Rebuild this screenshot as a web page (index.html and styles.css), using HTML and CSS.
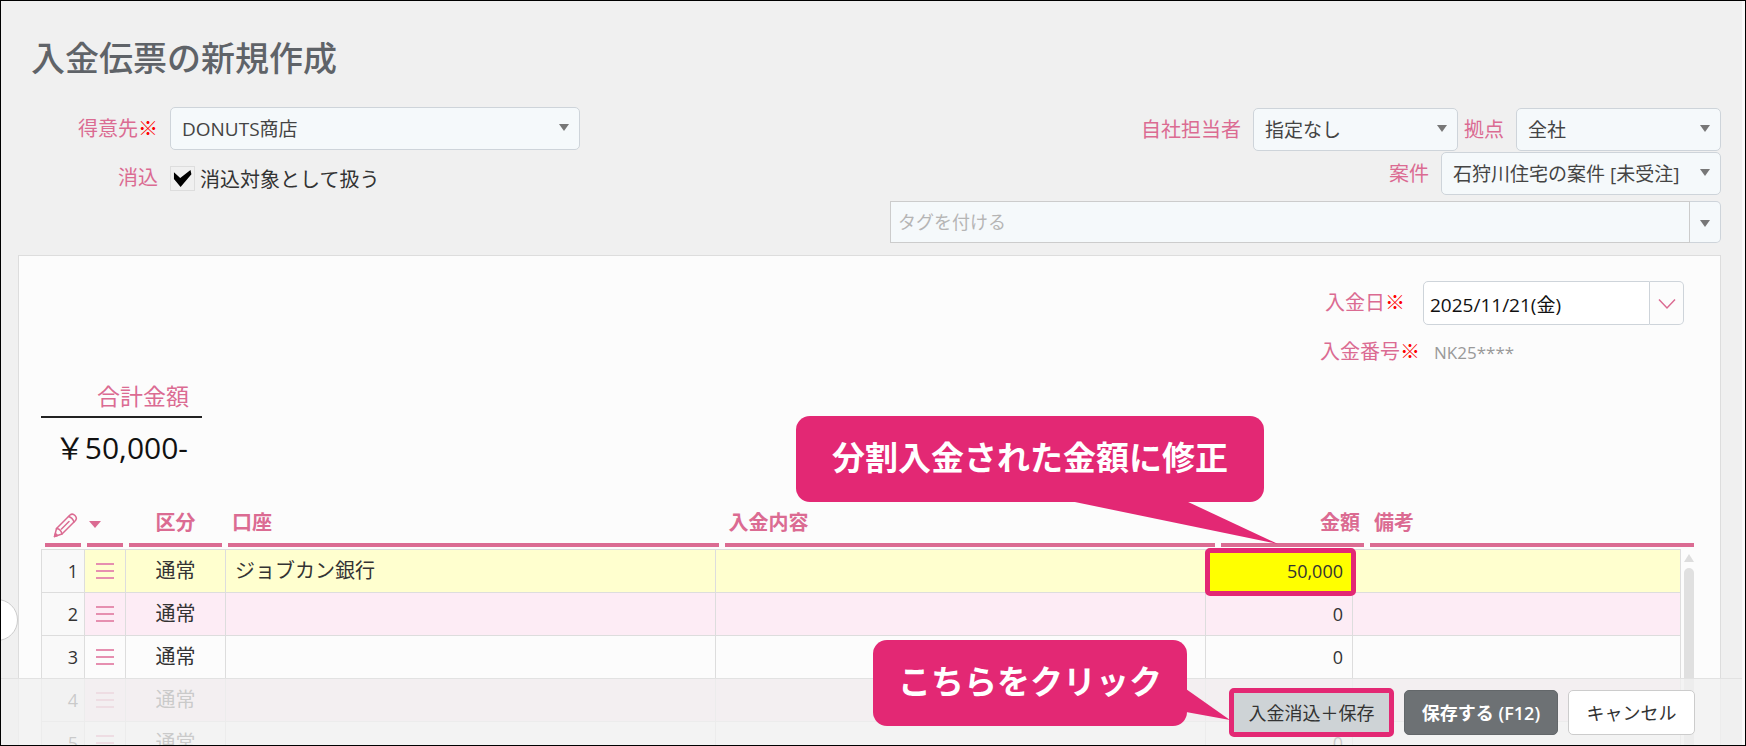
FILE: index.html
```html
<!DOCTYPE html>
<html lang="ja">
<head>
    <meta charset="UTF-8">
    <title>入金伝票の新規作成</title>
    <link rel="stylesheet" href="styles.css">
</head>
<body>
<div class="page">
    <h1 class="title">入金伝票の新規作成</h1>

    <!--伝票ヘッダー-->
    <div class="head">
        <div class="head-left">
            <label class="label" for="customer">得意先<span class="req">※</span></label>
            <div class="select customer">
                <select id="customer"><option>DONUTS商店</option></select>
            </div>
            <label class="label" for="clear">消込</label>
            <div class="check">
                <input type="checkbox" id="clear" checked>
                <label for="clear">消込対象として扱う</label>
            </div>
        </div>
        <div class="head-right">
            <div class="line">
                <label class="label" for="staff">自社担当者</label>
                <div class="select staff">
                    <select id="staff"><option>指定なし</option></select>
                </div>
                <label class="label base-label" for="base">拠点</label>
                <div class="select staff">
                    <select id="base"><option>全社</option></select>
                </div>
            </div>
            <div class="line">
                <label class="label" for="project">案件</label>
                <div class="select project">
                    <select id="project"><option>石狩川住宅の案件 [未受注]</option></select>
                </div>
            </div>
            <div class="tag">
                <input type="text" placeholder="タグを付ける" aria-label="タグ">
                <button type="button" aria-label="タグ一覧"><i class="caret"></i></button>
            </div>
        </div>
    </div>

    <!--伝票本体-->
    <div class="panel">
        <div class="date-row">
            <label class="label" for="date">入金日<span class="req">※</span></label>
            <div class="date">
                <input type="text" id="date" value="2025/11/21(金)">
                <button type="button" aria-label="カレンダー">
                    <svg width="18" height="12" viewBox="0 0 18 12"><path d="M1 1.5l8 8.5 8-8.5" fill="none" stroke="#db6b92" stroke-width="1.5"/></svg>
                </button>
            </div>
        </div>
        <div class="number-row">
            <span class="label">入金番号<span class="req">※</span></span>
            <span class="number">NK25****</span>
        </div>

        <div class="total">
            <div class="total-label">合計金額</div>
            <div class="total-value">￥50,000-</div>
        </div>

        <!--明細-->
        <table class="grid-head">
            <tr>
                <th class="h-no">
                    <svg width="26" height="26" viewBox="0 0 26 26" fill="none" stroke="#db6b92" stroke-width="1.5" stroke-linejoin="round" stroke-linecap="round">
                        <path d="M1.500 24.500L3.500 16.500L17 3Q19.500 1 22 3.500T22.500 8.500L9 22Z"/>
                        <path d="M3.500 16.500Q8 17 9 22M15.500 4.500Q19.500 5.500 21 10M8.500 17L16 9.500"/>
                        <path d="M1.500 24.500L2.500 21.500L4.500 23.500Z" fill="#db6b92"/>
                    </svg>
                </th>
                <th class="h-menu"><i class="caret caret-pink"></i></th>
                <th class="h-kind">区分</th>
                <th>口座</th>
                <th>入金内容</th>
                <th class="h-money">金額</th>
                <th class="h-note">備考</th>
            </tr>
        </table>
        <div class="grid-body">
            <table class="grid">
                <tr class="current">
                    <td class="no">1</td>
                    <td class="menu"><i class="bars"></i></td>
                    <td class="kind">通常</td>
                    <td>ジョブカン銀行</td>
                    <td></td>
                    <td class="money marked">50,000</td>
                    <td class="note"></td>
                </tr>
                <tr class="even">
                    <td class="no">2</td>
                    <td class="menu"><i class="bars"></i></td>
                    <td class="kind">通常</td>
                    <td></td>
                    <td></td>
                    <td class="money">0</td>
                    <td class="note"></td>
                </tr>
                <tr>
                    <td class="no">3</td>
                    <td class="menu"><i class="bars"></i></td>
                    <td class="kind">通常</td>
                    <td></td>
                    <td></td>
                    <td class="money">0</td>
                    <td class="note"></td>
                </tr>
                <tr class="even">
                    <td class="no">4</td>
                    <td class="menu"><i class="bars"></i></td>
                    <td class="kind">通常</td>
                    <td></td>
                    <td></td>
                    <td class="money">0</td>
                    <td class="note"></td>
                </tr>
                <tr>
                    <td class="no">5</td>
                    <td class="menu"><i class="bars"></i></td>
                    <td class="kind">通常</td>
                    <td></td>
                    <td></td>
                    <td class="money">0</td>
                    <td class="note"></td>
                </tr>
            </table>
            <div class="scroll">
                <i class="scroll-up"></i>
                <div class="scroll-thumb"></div>
            </div>
        </div>
    </div>

    <!--サイドメニューのつまみ-->
    <div class="knob"></div>

    <!--フッター-->
    <div class="foot">
        <button type="button" class="btn btn-clear">入金消込＋保存</button>
        <button type="button" class="btn btn-save">保存する (F12)</button>
        <button type="button" class="btn btn-cancel">キャンセル</button>
    </div>

    <!--吹き出し-->
    <div class="callout callout-money">分割入金された金額に修正</div>
    <div class="callout callout-click">こちらをクリック</div>
</div>
</body>
</html>
```

FILE: styles.css
```css
*{
    margin:0;
    padding:0;
    box-sizing:border-box;
}
body{
    font-family:"Open Sans","Noto Sans CJK JP",sans-serif;
    font-size:20px;
    color:#333;
}
input,select,button{
    font-family:inherit;
    font-size:19px;
    color:inherit;
}
.page{
    height:100vh;
    border:1px solid #000;
    background:#f0f0f0;
    box-shadow:inset -3px 0 #f9f9f9;
    position:relative;
    overflow:hidden;
    display:flex;
    flex-direction:column;
}
.title{
    padding:32px 30px 0;
    font-size:34px;
    line-height:50px;
    font-weight:500;
    color:#5f6368;
}
.label{
    color:#db6b92;
    line-height:28px;
    white-space:nowrap;
}
.req{
    color:#f00;
}

/* ヘッダー */
.head{
    padding:24px 24px 0 17px;
    display:flex;
    justify-content:space-between;
}
.head-left{
    display:grid;
    grid-template-columns:140px 410px;
    grid-auto-rows:43px 56px;
    column-gap:12px;
    align-items:center;
    align-content:start;
    text-align:right;
}
.select{
    position:relative;
    height:43px;
}
.select select{
    width:100%;
    height:100%;
    padding:0 11px;
    border:1px solid #ced4da;
    border-radius:5px;
    background:#f5f9fb;
    color:#444;
    appearance:none;
}
.select:after,.caret{
    content:"";
    border-top:7px solid #777;
    border-left:5px solid transparent;
    border-right:5px solid transparent;
}
.select:after{
    position:absolute;
    top:17px;
    right:11px;
    pointer-events:none;
}
.check{
    display:flex;
    align-items:center;
    gap:5px;
}
.check input{
    appearance:none;
    width:25px;
    height:25px;
    border:1px solid #ddd;
    background:#f0f0f0;
}
.check input:checked:after{
    content:"";
    display:block;
    width:19px;
    height:19px;
    margin:2px;
    background:#000;
    clip-path:polygon(5% 20%,38% 50%,92% 8%,97% 30%,40% 97%,5% 55%);
}
.head-right{
    width:831px;
    max-width:60%;
    padding-top:1px;
}
.line{
    display:flex;
    justify-content:flex-end;
    align-items:center;
    gap:12px;
    margin-bottom:1px;
}
.staff{
    width:205px;
}
.base-label{
    margin-left:-6px;
}
.project{
    width:280px;
}
.tag{
    display:flex;
    height:42px;
    margin-top:6px;
}
.tag input{
    flex:1;
    padding:0 7px;
    font-size:18px;
    border:1px solid #ccc;
    background:#f5f9fb;
}
.tag input::placeholder{
    color:#b5b5b5;
}
.tag button{
    width:31px;
    border:1px solid #ced4da;
    border-left:0;
    border-radius:0 5px 5px 0;
    background:#f5f9fb;
}
.caret{
    display:inline-block;
    vertical-align:middle;
}

/* 本体 */
.panel{
    flex:1;
    min-height:0;
    margin:12px 24px 0 17px;
    padding:25px 26px 0 22px;
    border:1px solid #ddd;
    border-bottom:0;
    background:#fcfcfc;
    overflow:hidden;
}
.date-row,.number-row{
    display:flex;
    justify-content:flex-end;
    align-items:center;
    padding-right:10px;
}
.date-row{
    gap:18px;
}
.date{
    display:flex;
    width:261px;
    height:44px;
}
.date input{
    flex:1;
    min-width:0;
    padding:2px 6px 0;
    color:#111;
    border:1px solid #ced4da;
    border-radius:5px 0 0 5px;
    background:#fff;
}
.date button{
    width:34px;
    border:1px solid #ced4da;
    border-left:0;
    border-radius:0 5px 5px 0;
    background:#fcfcfc;
}
.number-row{
    gap:14px;
    margin-top:13px;
}
.number{
    width:250px;
    font-size:17px;
    color:#999;
}
.total{
    width:161px;
    margin-top:15px;
    text-align:right;
}
.total-label{
    padding:0 13px 5px;
    font-size:23px;
    line-height:30px;
    color:#db6b92;
    border-bottom:2px solid #222;
}
.total-value{
    padding:10px 14px 0 0;
    font-size:30px;
    line-height:40px;
    color:#111;
    white-space:nowrap;
}

/* 明細 */
.grid-head{
    display:flex;
    margin-top:35px;
    padding-left:4px;
}
.grid-head tbody{
    flex:1;
}
.grid-head tr{
    display:flex;
    gap:6px;
}
.grid-head th{
    flex:1;
    height:44px;
    padding:0 4px;
    border-bottom:4px solid #db6b92;
    line-height:40px;
    font-weight:700;
    text-align:left;
    color:#db6b92;
}
.grid-head .h-no{
    flex:0 0 36px;
    padding:0 0 0 8px;
}
.h-no svg{
    display:block;
    margin-top:9px;
}
.grid-head .h-menu{
    flex:0 0 36px;
    padding:0 2px;
}
.grid-head .h-kind{
    flex:0 0 93px;
    text-align:center;
}
.grid-head .h-money{
    flex:0 0 143px;
    text-align:right;
}
.grid-head .h-note{
    flex:0 0 324px;
}
.caret-pink{
    border-width:7px 6px 0;
    border-top-color:#db6b92;
}
.grid-body{
    display:flex;
    align-items:flex-start;
    margin-top:2px;
    gap:3px;
}
.grid{
    flex:1;
    width:100%;
    table-layout:fixed;
    border-collapse:collapse;
}
.grid td{
    height:43px;
    padding:0 9px;
    border:1px solid #ddd;
    line-height:28px;
}
.grid .even{
    background:#fdecf5;
}
.grid .current{
    background:#ffffcf;
}
.grid .no{
    width:43px;
    padding:0 6px;
    font-size:18px;
    text-align:right;
    background:#f9f9f9;
}
.grid .menu{
    width:41px;
    padding:0 11px;
}
.bars{
    display:block;
    height:16px;
    border-top:2px solid #e68fb0;
    border-bottom:2px solid #e68fb0;
    background:linear-gradient(#e68fb0,#e68fb0) center/100% 2px no-repeat;
}
.grid .kind{
    width:100px;
    text-align:center;
}
.grid .money{
    width:147px;
    font-size:18px;
    text-align:right;
}
.grid .note{
    width:328px;
}
.grid .marked{
    position:relative;
    background:#ff0;
}
.marked:after{
    content:"";
    position:absolute;
    top:-2px;
    left:-1px;
    right:-4px;
    bottom:-4px;
    border:5px solid #e32874;
    border-radius:5px;
}
.scroll{
    flex:0 0 10px;
    padding-top:5px;
}
.scroll-up{
    display:block;
    border-bottom:8px solid #ddd;
    border-left:5px solid transparent;
    border-right:5px solid transparent;
}
.scroll-thumb{
    height:220px;
    margin-top:6px;
    border-radius:5px;
    background:#e0e0e0;
}
.knob{
    position:absolute;
    left:-25px;
    bottom:104px;
    width:42px;
    height:42px;
    border:1px solid #ccc;
    border-radius:50%;
    background:#fff;
}

/* フッター */
.foot{
    position:absolute;
    left:0;
    right:3px;
    bottom:0;
    height:67px;
    padding-right:47px;
    border-top:1px solid #e2e2e2;
    background:rgba(240,240,240,.8);
    display:flex;
    justify-content:flex-end;
    align-items:center;
    gap:10px;
}
.btn{
    height:45px;
    border:1px solid #ccc;
    border-radius:5px;
    font-size:18px;
    white-space:nowrap;
}
.btn-clear{
    width:165px;
    height:49px;
    border:5px solid #e32874;
    background:#ced3d6;
}
.btn-save{
    width:154px;
    border-color:#63676a;
    background:#6d7174;
    font-weight:600;
    color:#fff;
}
.btn-cancel{
    width:127px;
    background:#fff;
}

/* 吹き出し */
.callout{
    position:absolute;
    height:86px;
    border-radius:14px;
    background:#e32874;
    font-size:33px;
    line-height:84px;
    font-weight:700;
    text-align:center;
    color:#fff;
}
.callout:after{
    content:"";
    position:absolute;
    background:#e32874;
}
.callout-money{
    right:481px;
    bottom:243px;
    width:468px;
}
.callout-money:after{
    top:85px;
    left:274px;
    width:208px;
    height:43px;
    clip-path:polygon(0 0,116px 0,100% 100%);
}
.callout-click{
    right:558px;
    bottom:19px;
    width:314px;
}
.callout-click:after{
    top:49px;
    left:313px;
    width:44px;
    height:31px;
    clip-path:polygon(0 0,100% 100%,0 23px);
}
```
